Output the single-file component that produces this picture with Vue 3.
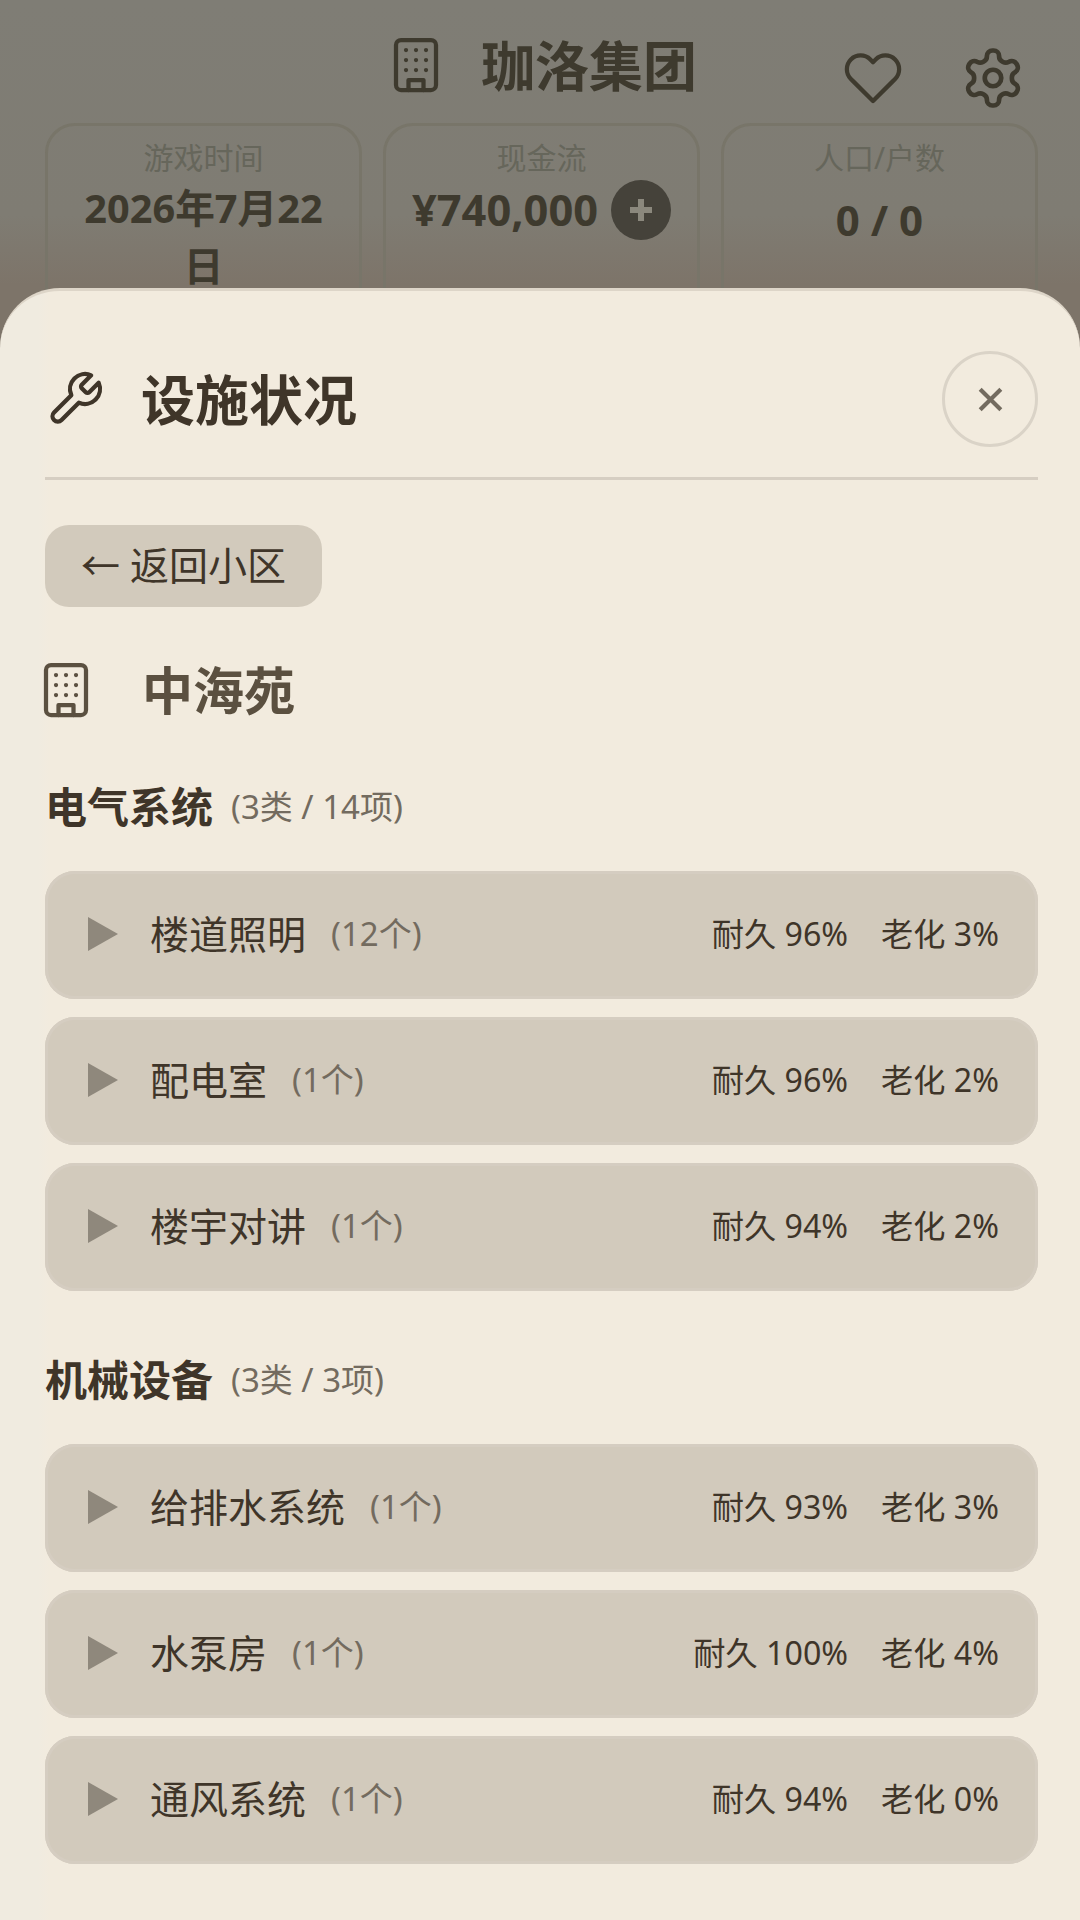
<template>
  <div class="screen">
    <header class="top-bar">
      <div class="brand">
        <svg class="icon" viewBox="0 0 24 24"><rect x="4" y="2" width="16" height="20" rx="2" /><path d="M9 22v-4h6v4M8 6h.01M12 6h.01M16 6h.01M8 10h.01M12 10h.01M16 10h.01M8 14h.01M12 14h.01M16 14h.01" /></svg>
        <h1>珈洛集团</h1>
      </div>
      <div class="top-actions">
        <svg class="icon heart" viewBox="0 0 24 24"><path d="M20.84 4.61a5.5 5.5 0 0 0-7.78 0L12 5.67l-1.06-1.06a5.5 5.5 0 0 0-7.78 7.78l1.06 1.06L12 21.23l7.78-7.78 1.06-1.06a5.5 5.5 0 0 0 0-7.78z" /></svg>
        <svg class="icon gear" viewBox="0 0 24 24"><path d="M12.22 2h-.44a2 2 0 0 0-2 2v.18a2 2 0 0 1-1 1.73l-.43.25a2 2 0 0 1-2 0l-.15-.08a2 2 0 0 0-2.73.73l-.22.38a2 2 0 0 0 .73 2.73l.15.1a2 2 0 0 1 1 1.72v.51a2 2 0 0 1-1 1.74l-.15.09a2 2 0 0 0-.73 2.73l.22.38a2 2 0 0 0 2.73.73l.15-.08a2 2 0 0 1 2 0l.43.25a2 2 0 0 1 1 1.73V20a2 2 0 0 0 2 2h.44a2 2 0 0 0 2-2v-.18a2 2 0 0 1 1-1.73l.43-.25a2 2 0 0 1 2 0l.15.08a2 2 0 0 0 2.73-.73l.22-.39a2 2 0 0 0-.73-2.73l-.15-.08a2 2 0 0 1-1-1.74v-.5a2 2 0 0 1 1-1.74l.15-.09a2 2 0 0 0 .73-2.73l-.22-.38a2 2 0 0 0-2.73-.73l-.15.08a2 2 0 0 1-2 0l-.43-.25a2 2 0 0 1-1-1.73V4a2 2 0 0 0-2-2z" /><circle cx="12" cy="12" r="3" /></svg>
      </div>
    </header>

    <section class="stats">
      <div class="stat-card">
        <span class="stat-label">游戏时间</span>
        <strong class="stat-value date">2026年7月22日</strong>
      </div>
      <div class="stat-card">
        <span class="stat-label">现金流</span>
        <div class="cash-row">
          <strong class="stat-value cash">¥740,000</strong>
          <span class="add-btn"><i></i></span>
        </div>
      </div>
      <div class="stat-card">
        <span class="stat-label">人口/户数</span>
        <strong class="stat-value people">0 / 0</strong>
      </div>
    </section>

    <div class="sheet">
      <div class="sheet-head">
        <svg class="icon wrench" viewBox="0 0 24 24"><path d="M14.7 6.3a1 1 0 0 0 0 1.4l1.6 1.6a1 1 0 0 0 1.4 0l3.77-3.77a6 6 0 0 1-7.94 7.94l-6.91 6.91a2.12 2.12 0 0 1-3-3l6.91-6.91a6 6 0 0 1 7.94-7.94l-3.76 3.76z" /></svg>
        <h2>设施状况</h2>
        <button type="button" class="close-btn">
          <svg viewBox="0 0 24 24"><path d="M4 4l16 16M20 4L4 20" /></svg>
        </button>
      </div>

      <button type="button" class="back-btn">← 返回小区</button>

      <div class="estate-title">
        <svg class="icon" viewBox="0 0 24 24"><rect x="4" y="2" width="16" height="20" rx="2" /><path d="M9 22v-4h6v4M8 6h.01M12 6h.01M16 6h.01M8 10h.01M12 10h.01M16 10h.01M8 14h.01M12 14h.01M16 14h.01" /></svg>
        <h3>中海苑</h3>
      </div>

      <section v-for="group in groups" :key="group.name" class="group">
        <div class="group-title">
          <strong>{{ group.name }}</strong>
          <span>{{ group.summary }}</span>
        </div>
        <div class="rows">
          <div v-for="item in group.items" :key="item.name" class="row">
            <span class="arrow"></span>
            <span class="row-name">{{ item.name }}</span>
            <span class="row-count">({{ item.count }}个)</span>
            <span class="row-stats">
              <span>耐久 {{ item.durability }}%</span>
              <span>老化 {{ item.aging }}%</span>
            </span>
          </div>
        </div>
      </section>
    </div>
  </div>
</template>

<script setup>
const groups = [
  {
    name: '电气系统',
    summary: '(3类 / 14项)',
    items: [
      { name: '楼道照明', count: 12, durability: 96, aging: 3 },
      { name: '配电室', count: 1, durability: 96, aging: 2 },
      { name: '楼宇对讲', count: 1, durability: 94, aging: 2 }
    ]
  },
  {
    name: '机械设备',
    summary: '(3类 / 3项)',
    items: [
      { name: '给排水系统', count: 1, durability: 93, aging: 3 },
      { name: '水泵房', count: 1, durability: 100, aging: 4 },
      { name: '通风系统', count: 1, durability: 94, aging: 0 }
    ]
  }
]
</script>

<style scoped>
.screen {
  position: relative;
  width: 1080px;
  height: 1920px;
  overflow: hidden;
  padding: 34px 42px 0 45px;
  box-sizing: border-box;
  background: linear-gradient(180deg, #7f7d75 0, #7f7c73 215px, #7d7469 285px);
  font-family: "Noto Sans", "Noto Sans CJK SC", sans-serif;
  color: #3e3a2e;
}
.icon {
  width: 60px;
  height: 60px;
  flex: none;
  fill: none;
  stroke: currentColor;
  stroke-width: 1.7;
  stroke-linecap: round;
  stroke-linejoin: round;
}
.top-bar {
  height: 60px;
  margin-bottom: 29px;
}
.brand {
  display: flex;
  justify-content: center;
  align-items: center;
  gap: 35px;
}
h1, h2, h3 {
  margin: 0;
  font-weight: 700;
}
h1 {
  margin-top: 2px;
  font-size: 54px;
  line-height: 60px;
}
.top-actions {
  position: absolute;
  top: 45px;
  right: 54px;
  display: flex;
  align-items: center;
  gap: 57px;
}
.gear {
  width: 66px;
  height: 66px;
}
.stats {
  display: grid;
  grid-template-columns: repeat(3, 1fr);
  gap: 21px;
}
.stat-card {
  height: 240px;
  box-sizing: border-box;
  border: 3px solid #787569;
  border-radius: 30px;
  padding: 12px 12px 0;
  display: flex;
  flex-direction: column;
  align-items: center;
  text-align: center;
}
.stat-label {
  font-size: 30px;
  line-height: 40px;
  color: #66665b;
}
.stat-value {
  font-size: 42px;
  line-height: 58px;
  font-weight: 700;
}
.date {
  font-size: 39.7px;
  padding: 0 10px;
  margin-top: 1px;
}
.cash {
  font-size: 43.4px;
}
.cash-row {
  display: flex;
  align-items: center;
  gap: 13px;
  margin-top: 2px;
}
.people {
  margin-top: 13px;
}
.add-btn {
  position: relative;
  width: 60px;
  height: 60px;
  border-radius: 50%;
  background: #45423a;
}
.add-btn i::before,
.add-btn i::after {
  content: "";
  position: absolute;
  background: #8b887d;
}
.add-btn i::before {
  left: 19px;
  top: 27px;
  width: 22px;
  height: 6px;
}
.add-btn i::after {
  left: 27px;
  top: 19px;
  width: 6px;
  height: 22px;
}
.sheet {
  position: absolute;
  left: 0;
  right: 0;
  top: 288px;
  bottom: 0;
  padding: 61px 42px 0 45px;
  border-top: 3px solid #ddd5c8;
  border-radius: 60px 60px 0 0;
  background: linear-gradient(90deg, #f0ebe0 0, #f0ebe0 38px, #f2ebde 50px);
}
.sheet-head {
  display: flex;
  align-items: center;
  height: 94px;
  padding-bottom: 31px;
  border-bottom: 3px solid #d6cec2;
}
.sheet-head h2 {
  flex: 1;
  margin: 2px 0 0 36px;
  font-size: 54px;
  line-height: 60px;
  color: #3f3529;
}
.wrench {
  color: #3f3529;
}
.close-btn {
  width: 96px;
  height: 96px;
  padding: 0;
  border: 3px solid #dad3c7;
  border-radius: 50%;
  background: transparent;
  display: grid;
  place-items: center;
}
.close-btn svg {
  width: 31px;
  height: 31px;
  fill: none;
  stroke: #736b5f;
  stroke-width: 3.2;
}
.back-btn {
  display: block;
  width: 277px;
  height: 82px;
  margin-top: 45px;
  padding: 0 0 6px;
  border: none;
  border-radius: 24px;
  background: #d2cabc;
  font: inherit;
  font-size: 39px;
  color: #3f3529;
}
.estate-title {
  display: flex;
  align-items: center;
  height: 60px;
  margin-top: 53px;
  color: #5b5040;
}
.estate-title .icon {
  margin-left: -9px;
}
.estate-title h3 {
  margin-left: 46px;
  font-size: 51px;
  line-height: 60px;
}
.group {
  margin-top: 56px;
}
.group + .group {
  margin-top: 58px;
}
.group-title {
  display: flex;
  align-items: center;
  gap: 18px;
  height: 61px;
  box-sizing: border-box;
  padding-bottom: 4px;
  margin-bottom: 34px;
}
.group-title strong {
  font-size: 42px;
  color: #3f3529;
}
.group-title span {
  font-size: 33px;
  color: #736b5f;
}
.rows {
  display: grid;
  gap: 18px;
}
.row {
  display: flex;
  align-items: center;
  height: 128px;
  box-sizing: border-box;
  padding: 0 39px 2px 43px;
  border-radius: 30px;
  background: #d2cabc;
  box-shadow: inset 0 0 0 3px #d5cdc1;
}
.arrow {
  width: 0;
  height: 0;
  margin-right: 32px;
  border-style: solid;
  border-width: 17px 0 17px 30px;
  border-color: transparent transparent transparent #8f887c;
}
.row-name,
.row-count,
.row-stats {
  margin-bottom: 4px;
}
.row-name {
  font-size: 39px;
  color: #3f3529;
}
.row-count {
  margin-left: 25px;
  font-size: 33px;
  color: #736b5f;
}
.row-stats {
  margin-left: auto;
  display: flex;
  gap: 33px;
  font-size: 32.2px;
  color: #3f3529;
}
</style>

<style>
html, body {
  margin: 0;
  background: #7f7c73;
}
</style>
